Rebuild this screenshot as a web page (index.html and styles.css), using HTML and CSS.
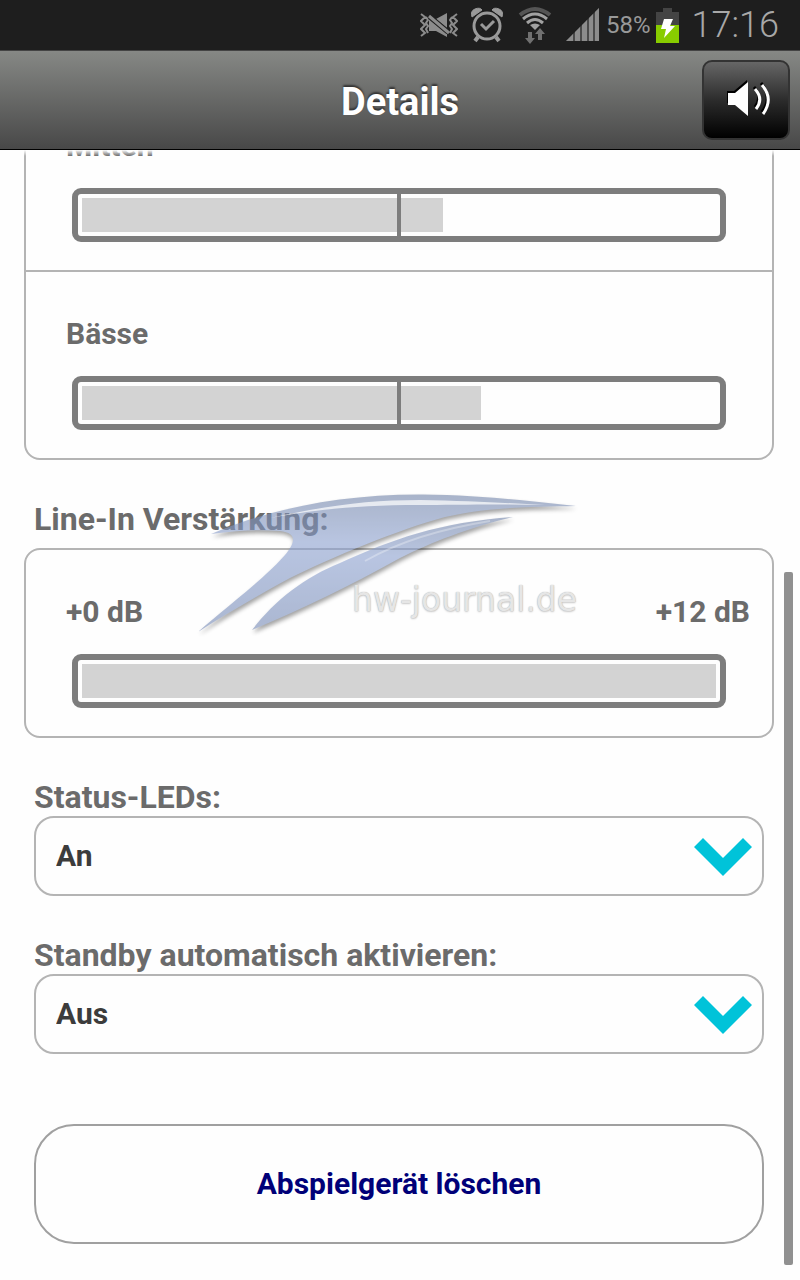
FILE: index.html
```
<!DOCTYPE html>
<html lang="de">
<head>
  <meta charset="UTF-8">
  <meta name="viewport" content="width=device-width, initial-scale=1.0">
  <title>Details</title>
  <link rel="stylesheet" href="styles.css">
</head>
<body>

<!-- Status bar -->
<div class="status-bar">
  <svg class="icon-mute" width="38" height="28" viewBox="0 0 38 28" fill="none" stroke="#8c8c8c" stroke-width="2">
    <path d="M1 3l4 3-4 4 4 4-4 4 4 4-4 3M6 6l2 3-2 3 2 3-2 3 2 4M32 6l-2 3 2 3-2 3 2 3-2 4M37 3l-4 3 4 4-4 4 4 4-4 4 4 3"/>
    <path d="M9 8l18 15v3l-11-6H9zM16 8l11-6v15z" fill="#8c8c8c" stroke="none"/>
    <path d="M10 6l18 15" stroke="#1e1e1e" stroke-width="5"/>
    <path d="M9 5l20 17" stroke-width="3"/>
  </svg>
  <svg class="icon-alarm" width="34" height="36" viewBox="0 0 34 36" fill="none" stroke="#9a9a9a">
    <circle cx="17" cy="19" r="13" stroke-width="3"/>
    <path d="M11 17l5 5 8-8" stroke-width="3"/>
    <path d="M8 30l-3 4M26 30l3 4" stroke-width="4"/>
    <path d="M2 10Q0 4 5 2t7 1zM32 10Q34 4 29 2t-7 1z" fill="#9a9a9a" stroke-width="1"/>
  </svg>
  <svg class="icon-wifi" width="34" height="38" viewBox="0 0 34 38" fill="none">
    <path d="M2 9Q17-3 32 9" stroke="#555" stroke-width="4"/>
    <path d="M5 13Q17 3 29 13M9 17Q17 10 25 17" stroke="#a2a2a2" stroke-width="3"/>
    <path d="M12 19q5-3 10 0l-5 5z" fill="#a2a2a2"/>
    <path d="M10 26h4v6h3l-5 6-5-6h3zM20 34h4v-6h3l-5-6-5 6h3z" fill="#707070"/>
  </svg>
  <svg class="icon-signal" width="34" height="34" viewBox="0 0 34 34" fill="#8c8c8c">
    <path d="M0 33l7-7v7zM9 24l5-5v14H9zM16 17l5-5v21h-5zM23 10l4-4v27h-4zM29 4l4-4v33h-4z"/>
    <path d="M0 33L33 0v33z" opacity=".4"/>
  </svg>
  <span class="battery-level">58%</span>
  <svg class="icon-battery" width="23" height="35" viewBox="0 0 23 35">
    <path d="M7 0h9v4h7v13H0V4h7z" fill="#444"/>
    <path d="M0 17h23v18H0z" fill="#88cc00"/>
    <path d="M8 11h9l-3 7h5L8 30l2-9H5z" fill="#fff"/>
  </svg>
  <span class="clock">17:16</span>
</div>

<!-- Title bar -->
<header class="title-bar">
  <h1>Details</h1>
  <button class="volume-button" type="button" aria-label="Lautstärke">
    <svg width="48" height="40" viewBox="-1 0 48 40">
      <path d="M4 11h7L24 0v34L11 23H4z" fill="#000"/>
      <path d="M5 13h7L25 2v34L12 25H5z" fill="#fff"/>
      <path d="M31 7q9 10 1 20M38 3q12 14 1 29" fill="none" stroke="#000" stroke-width="3"/>
      <path d="M32 9q9 10 1 20M39 5q12 14 1 29" fill="none" stroke="#fff" stroke-width="3"/>
    </svg>
  </button>
</header>

<main class="content">
  <div class="card">
    <div class="row">
      <label for="mitten">Mitten</label>
      <input class="level centered" id="mitten" type="range" min="0" max="100" value="57" style="--level: 57%">
    </div>
    <div class="row">
      <label for="baesse">Bässe</label>
      <input class="level centered" id="baesse" type="range" min="0" max="100" value="63" style="--level: 63%">
    </div>
  </div>

  <h2><label for="linein">Line-In Verstärkung:</label></h2>
  <div class="card gain">
    <div class="row">
      <div class="scale"><span>+0 dB</span><span>+12 dB</span></div>
      <input class="level" id="linein" type="range" min="0" max="12" value="12" style="--level: 100%">
    </div>
  </div>

  <h2><label for="leds">Status-LEDs:</label></h2>
  <div class="select">
    <select id="leds">
      <option>An</option>
      <option>Aus</option>
    </select>
    <svg class="arrow" width="58" height="44" viewBox="0 -3 58 44"><path d="M0 10l9-9 20 20L49 1l9 9-29 29z" fill="#00c3d9"/></svg>
  </div>

  <h2><label for="standby">Standby automatisch aktivieren:</label></h2>
  <div class="select">
    <select id="standby">
      <option>Aus</option>
      <option>An</option>
    </select>
    <svg class="arrow" width="58" height="44" viewBox="0 -3 58 44"><path d="M0 10l9-9 20 20L49 1l9 9-29 29z" fill="#00c3d9"/></svg>
  </div>

  <button class="delete-button" type="button">Abspielgerät löschen</button>

  <!-- Watermark -->
  <div class="watermark">
    <svg width="400" height="160" viewBox="190 485 400 160">
      <defs>
        <linearGradient id="wing" x1="0" y1="0" x2="0" y2="1">
          <stop offset="0" stop-color="#7183a8"/>
          <stop offset=".35" stop-color="#8ba0cf"/>
          <stop offset="1" stop-color="#7488b4"/>
        </linearGradient>
      </defs>
      <g class="wings" fill="url(#wing)">
        <path d="M211 534C270 509 340 494 423 494.500C480 495 530 501 576 506C540 507 490 506 445 517C400 529 330 558 290 578C255 597 225 615 198 632C225 608 262 581 285 555C295 543 298 533 280 531C255 529 235 531 211 534z"/>
        <path d="M252 630C275 600 305 577 340 563C390 540 440 522 513 517C470 527 430 543 400 558C350 586 300 610 252 630z"/>
      </g>
      <path d="M270 518C330 505 370 500 420 500C470 501 510 503 545 505C500 504 450 505 420 505C360 505 320 509 270 518z" fill="#fff" opacity=".7"/>
      <path d="M365 561C400 541 440 529 490 521" fill="none" stroke="#fff" stroke-width="2" opacity=".3"/>
    </svg>
    <span>hw-journal.de</span>
  </div>

  <div class="scrollbar"></div>
</main>

</body>
</html>
```
FILE: styles.css
```
* {
  box-sizing: border-box;
  margin: 0;
  padding: 0;
}

body {
  display: flex;
  flex-direction: column;
  height: 100vh;
  background: #fefefe;
  color: #6b6b6b;
  font-family: Roboto, "Liberation Sans", sans-serif;
  font-size: 30px;
  font-weight: bold;
  line-height: 36px;
  overflow: hidden;
}

svg {
  display: block;
  flex: none;
}

.status-bar {
  display: flex;
  flex: none;
  justify-content: flex-end;
  align-items: center;
  height: 50px;
  padding-right: 21px;
  background: #1e1e1e;
  color: #999;
  font-weight: normal;
}

.icon-alarm {
  margin-left: 12px;
}

.icon-wifi {
  margin-left: 14px;
}

.icon-signal {
  margin-left: 14px;
}

.battery-level {
  margin-left: 6px;
  font-size: 24px;
}

.icon-battery {
  margin-left: 5px;
}

.clock {
  margin-left: 13px;
  color: #a8a8a8;
  font-size: 36px;
  font-weight: 300;
}

.title-bar {
  display: grid;
  grid-template-columns: 1fr auto 1fr;
  align-items: center;
  flex: none;
  height: 100px;
  padding: 0 10px;
  border-top: 1px solid #444;
  border-bottom: 1px solid #000;
  background: linear-gradient(#868885, #484848);
}

.title-bar h1 {
  grid-column: 2;
  padding-top: 4px;
  color: #fff;
  font-size: 38px;
  text-shadow: 0 -2px 2px #333;
}

.volume-button {
  display: flex;
  justify-content: center;
  align-items: center;
  justify-self: end;
  width: 88px;
  height: 80px;
  border: 2px solid #333;
  border-radius: 10px;
  background: linear-gradient(#666, #2c2c2c 50%, #000);
}

.content {
  position: relative;
  display: flex;
  flex: 1;
  flex-direction: column;
  justify-content: flex-end;
  min-height: 0;
  padding: 0 26px 36px 24px;
  overflow: hidden;
}

/* fade under the title bar */
.content::before {
  content: "";
  position: absolute;
  top: 0;
  left: 0;
  right: 0;
  height: 6px;
  background: linear-gradient(#fefefe, rgba(254, 254, 254, 0));
}

.card {
  flex: none;
  border: 2px solid #b4b4b4;
  border-radius: 16px;
}

.row {
  display: flex;
  flex-direction: column;
  gap: 24px;
  padding: 44px 22px 28px 40px;
}

.row + .row {
  border-top: 2px solid #b4b4b4;
}

.scale {
  display: flex;
  justify-content: space-between;
}

.level {
  appearance: none;
  height: 54px;
  margin: 0 24px 0 6px;
  padding: 4px;
  border: 6px solid #7d7d7d;
  border-radius: 9px;
  background: linear-gradient(#d3d3d3, #d3d3d3) 0 0 / var(--level) 100% no-repeat content-box;
}

.level.centered {
  background:
    linear-gradient(#7d7d7d, #7d7d7d) 50% 0 / 4px 100% no-repeat padding-box,
    linear-gradient(#d3d3d3, #d3d3d3) 0 0 / var(--level) 100% no-repeat content-box;
}

.level::-webkit-slider-thumb {
  appearance: none;
  width: 1px;
  height: 34px;
}

h2 {
  flex: none;
  margin: 42px 10px 0;
  padding-bottom: 2px;
  font-size: 32px;
  line-height: 34px;
}

.gain {
  margin-top: 10px;
}

.select {
  display: grid;
  align-items: center;
  flex: none;
  margin: 0 10px;
}

.select select {
  grid-area: 1 / 1;
  appearance: none;
  height: 80px;
  padding: 0 20px;
  border: 2px solid #b4b4b4;
  border-radius: 20px;
  background: none;
  color: #3c3c3c;
  font: inherit;
}

.arrow {
  grid-area: 1 / 1;
  justify-self: end;
  margin-right: 12px;
  pointer-events: none;
}

.delete-button {
  flex: none;
  height: 120px;
  margin: 70px 10px 0;
  border: 2px solid #a0a0a0;
  border-radius: 40px;
  background: none;
  color: #000078;
  font: inherit;
}

.watermark {
  position: absolute;
  top: 335px;
  left: 190px;
  pointer-events: none;
}

.wings {
  opacity: 0.6;
  filter: drop-shadow(1px 3px 2px rgba(0, 0, 0, 0.6));
}

.watermark span {
  position: absolute;
  top: 97px;
  left: 162px;
  color: #e6e6e6;
  font-family: "DejaVu Sans", sans-serif;
  font-size: 33px;
  font-weight: normal;
  text-shadow: 0 0 1px #aaa, 0 1px 2px #ccc;
}

.scrollbar {
  position: absolute;
  top: 422px;
  right: 7px;
  bottom: 15px;
  width: 9px;
  border-radius: 2px;
  background: #909090;
}
```
